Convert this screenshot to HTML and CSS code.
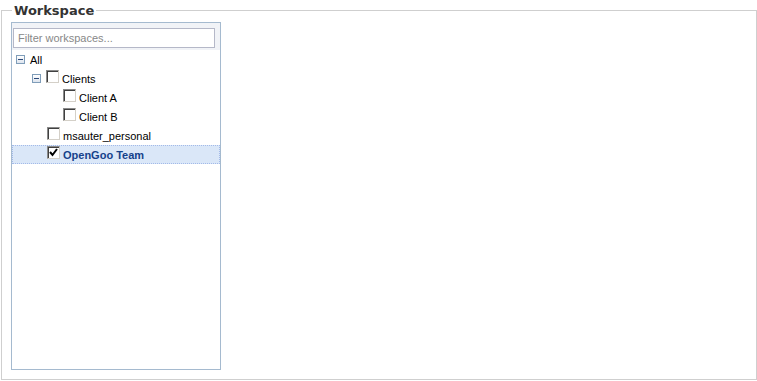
FILE: index.html
```html
<!DOCTYPE html>
<html lang="en">

<head>
    <meta charset="UTF-8">
    <title>Workspace</title>
    <link rel="stylesheet" href="styles.css">
</head>

<body>
    <fieldset class="workspace">
        <legend>Workspace</legend>
        <div class="ws-panel">
            <div class="ws-toolbar">
                <input type="text" class="ws-filter" placeholder="Filter workspaces...">
            </div>
            <ul class="ws-tree">
                <li class="node depth-0">
                    <span class="toggle"></span>
                    <span class="label">All</span>
                </li>
                <li class="node depth-1">
                    <span class="toggle"></span>
                    <span class="check"></span>
                    <span class="label">Clients</span>
                </li>
                <li class="node depth-2">
                    <span class="check"></span>
                    <span class="label">Client A</span>
                </li>
                <li class="node depth-2">
                    <span class="check"></span>
                    <span class="label">Client B</span>
                </li>
                <li class="node depth-1 leaf">
                    <span class="check"></span>
                    <span class="label">msauter_personal</span>
                </li>
                <li class="node depth-1 leaf selected">
                    <span class="check checked">
                        <svg width="9" height="9" viewBox="0 0 9 9"><path d="M1 4 L3.5 7 L8 1" fill="none" stroke="#000" stroke-width="2"/></svg>
                    </span>
                    <span class="label">OpenGoo Team</span>
                </li>
            </ul>
        </div>
    </fieldset>
</body>

</html>
```

FILE: styles.css
```css
body {
    margin: 0;
    padding: 3px 0 0 1px;
    background-color: #fff;
    font-family: "Liberation Sans", Arial, sans-serif;
    font-size: 11px;
    color: #000;
}

.workspace {
    margin: 0;
    height: 377px;
    box-sizing: border-box;
    border: 1px solid #cfcfcf;
    padding: 4px 9px 0 9px;
}

.workspace legend {
    padding: 0 2px;
    margin-left: 1px;
    font-family: "DejaVu Sans", Verdana, sans-serif;
    font-weight: bold;
    font-size: 13px;
    color: #333;
}

.ws-panel {
    width: 210px;
    height: 348px;
    box-sizing: border-box;
    border: 1px solid #a5bacf;
    background-color: #fff;
}

.ws-toolbar {
    background-color: #f1f3f7;
    padding: 5px 5px 2px 1px;
}

.ws-filter {
    display: block;
    width: 202px;
    height: 20px;
    box-sizing: border-box;
    margin: 0;
    border: 1px solid #b5b8c8;
    padding: 2px 4px;
    font-family: "Liberation Sans", Arial, sans-serif;
    font-size: 11px;
    background-color: #fff;
}

.ws-filter::placeholder {
    color: #888;
}

ul.ws-tree {
    list-style-type: none;
    margin: 0;
    padding: 0;
}

.node {
    display: flex;
    align-items: center;
    height: 19px;
    box-sizing: border-box;
    border: 1px dotted transparent;
}

.depth-0 {
    padding-left: 3px;
}

.depth-1 {
    padding-left: 19px;
}

.depth-1.leaf {
    padding-left: 34px;
}

.depth-2 {
    padding-left: 50px;
}

.toggle {
    width: 9px;
    height: 9px;
    box-sizing: border-box;
    border: 1px solid #7f9db9;
    background: linear-gradient(#fff, #dde4ee);
    position: relative;
    margin-right: 5px;
}

.toggle::after {
    content: "";
    position: absolute;
    left: 1px;
    top: 3px;
    width: 5px;
    height: 1px;
    background-color: #2c4a7a;
}

.check {
    width: 13px;
    height: 13px;
    box-sizing: border-box;
    border: 1px solid #8a8a8a;
    border-right-color: #d4d0c8;
    border-bottom-color: #d4d0c8;
    box-shadow: inset 1px 1px 0 #404040;
    background-color: #fff;
    margin-right: 3px;
    margin-top: -4px;
    display: flex;
    align-items: center;
    justify-content: center;
}

.label {
    white-space: nowrap;
}

.node.selected {
    background-color: #dae7f8;
    border-color: #a3bae9;
}

.node.selected .label {
    font-weight: bold;
    color: #15428b;
}
```
